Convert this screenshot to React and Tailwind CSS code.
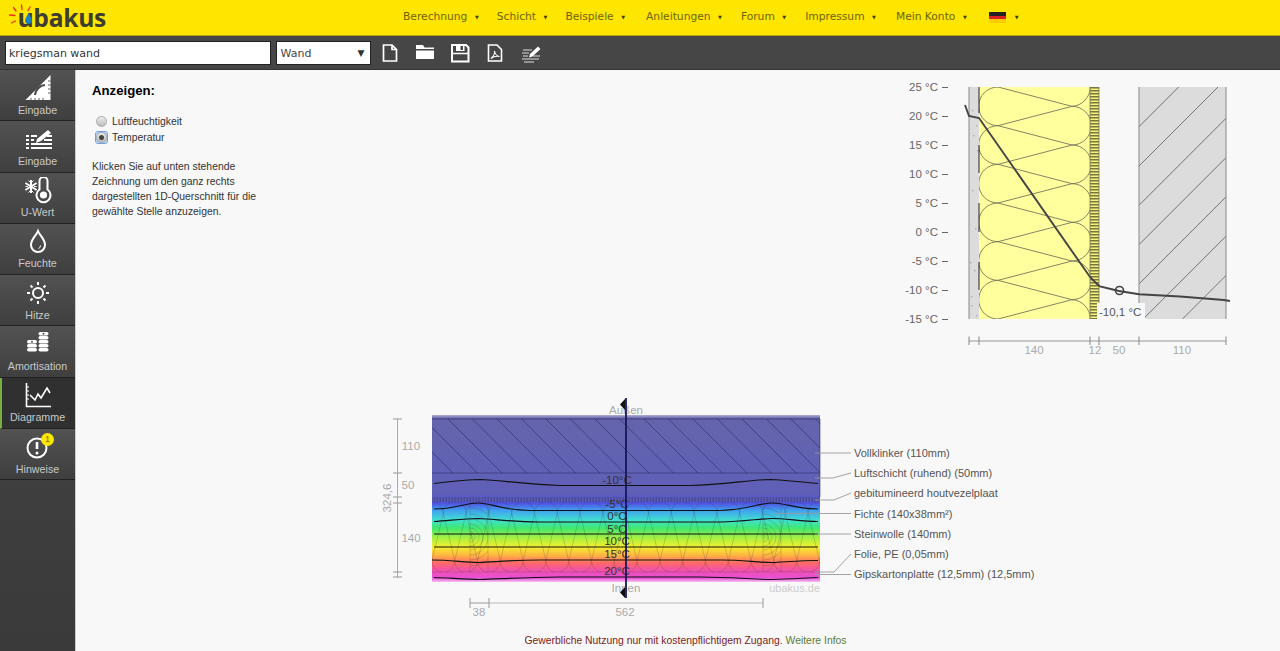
const navItems = [
  ['Berechnung', ''],
  ['Schicht', ''],
  ['Beispiele', ''],
  ['Anleitungen', 'ml-[3px]'],
  ['Forum', 'ml-[1px]'],
  ['Impressum', 'ml-[1px]'],
  ['Mein Konto', 'ml-[2px]'],
];

const range = (n) => Array.from({ length: n }, (_, i) => i);

function Logo() {
  return (
    <div className="relative w-[110px] h-[36px] shrink-0">
      <span className="absolute left-[17.5px] top-[0px] text-[24.6px] leading-[36px] font-bold tracking-[-0.3px] text-[#3d3d32] font-['Open_Sans',sans-serif]">
        ubakus
      </span>
      <svg className="absolute left-0 top-0" width="40" height="36" viewBox="0 0 40 36">
        <g stroke="#e8301c" strokeWidth="1.3" strokeLinecap="round">
          <path d="M21.5 5 L22 9.5" />
          <path d="M13.5 7.5 L16 11" />
          <path d="M9.5 15 L15 15.5" />
          <path d="M11.5 23 L15.5 21" />
          <path d="M30 7 L28 10.5" />
        </g>
        <path d="M28.5 13 c1.6 3 3.2 5 3.2 7.6 a3.3 3.3 0 0 1 -6.6 0 c0 -2.6 2 -4.6 3.4 -7.6z" fill="#1f7fc4" />
      </svg>
    </div>
  );
}

function Header() {
  return (
    <header className="h-[36px] bg-[#ffe600] border-b border-[#b8a600] flex items-center font-['DejaVu_Sans',sans-serif]">
      <Logo />
      <nav className="flex items-center ml-[293px] text-[10.7px] text-[#6e6410] gap-[18px]">
        {navItems.map(([item, extra]) => (
          <span key={item} className={'flex items-center gap-[7.5px] ' + extra}>
            {item}
            <span className="text-[5px] text-[#40400c]">▼</span>
          </span>
        ))}
        <span className="flex items-center gap-[9px] ml-[4px]">
          <span className="w-[17px] h-[11px] flex flex-col">
            <span className="h-1/3 bg-[#222]" />
            <span className="h-1/3 bg-[#d22]" />
            <span className="h-1/3 bg-[#fc0]" />
          </span>
          <span className="text-[5px] text-[#40400c]">▼</span>
        </span>
      </nav>
    </header>
  );
}

function ToolIcon({ children }) {
  return (
    <svg width="22" height="22" viewBox="0 0 22 22" className="shrink-0">
      {children}
    </svg>
  );
}

function Toolbar() {
  return (
    <div className="h-[34px] bg-[#464646] flex items-center pl-[5px] border-b border-[#333] font-['DejaVu_Sans',sans-serif]">
      <div className="w-[266px] h-[24px] bg-white border border-[#222] text-[11px] leading-[23px] pl-[3px] text-[#333]">kriegsman wand</div>
      <div className="ml-[4.5px] w-[95px] h-[24px] bg-white border border-[#222] text-[11px] leading-[23px] pl-[4px] text-[#444] flex justify-between pr-[5px]">
        Wand<span className="text-[9px] text-[#333]">▼</span>
      </div>
      <div className="flex items-center ml-[8px] gap-[13px]">
        <ToolIcon>
          <path d="M4.5 3 H13 L17.5 7.5 V19 H4.5 Z M13 3 V7.5 H17.5" fill="none" stroke="#fff" strokeWidth="1.7" />
        </ToolIcon>
        <ToolIcon>
          <path d="M2 5.5 V3 H9 L10.5 5.5 H20 V7 H2Z M2 8.5 H20 V17 H2Z" fill="#fff" />
        </ToolIcon>
        <ToolIcon>
          <path d="M3 3 H17 L19.5 5.5 V19.5 H3 Z" fill="none" stroke="#fff" strokeWidth="2" />
          <path d="M7 3 H15.5 V9 H7Z" fill="#fff" />
          <path d="M11.5 4 H14 V8 H11.5Z" fill="#464646" />
          <path d="M3 11.5 H19" stroke="#fff" strokeWidth="1.5" />
        </ToolIcon>
        <ToolIcon>
          <path d="M4.5 3 H13 L17.5 7.5 V19 H4.5 Z" fill="none" stroke="#fff" strokeWidth="1.6" />
          <path d="M7 16.5 C9 14.5 11 11 10.5 9 C11 12 13 14 15.5 14.5 C12.5 14 9.5 14.5 7 16.5Z" fill="none" stroke="#fff" strokeWidth="1.1" />
        </ToolIcon>
        <svg width="22" height="22" viewBox="0 0 22 22" className="shrink-0 ml-[1px]">
          <path d="M10 12 L18 4.5 L20.5 7 L12.5 14.5 L9 15.5Z" fill="#fff" />
          <path d="M3 8 H12 M2 11 H9 M3 14 H8 M2 17 H19 M4 20 H14 M13 14 H20" stroke="#ddd" strokeWidth="1" />
        </svg>
      </div>
    </div>
  );
}

const sideItems = [
  {
    label: 'Eingabe',
    icon: (
      <g>
        <path d="M1.5 26 L26.5 1 V26 Z" fill="#fff" />
        <path d="M11 21 A11 11 0 0 1 21 11" fill="none" stroke="#4a4a4a" strokeWidth="2.2" />
        <path d="M24 7 H26.5 M24 11 H26.5 M24 15 H26.5 M24 19 H26.5 M7 24 V26 M11 24 V26 M15 24 V26 M19 24 V26" stroke="#4a4a4a" strokeWidth="0.9" />
      </g>
    ),
  },
  {
    label: 'Eingabe',
    icon: (
      <g fill="#fff">
        <path d="M13 14 L24 5 L27 8 L17 16 L12 18Z" />
        <path d="M2 10 H5 V12 H2Z M7 10 H13 V12 H7Z M2 14 H5 V16 H2Z M7 14 H10 V16 H7Z M2 18 H5 V20 H2Z M7 18 H28 V20 H7Z M2 22 H5 V24 H2Z M7 22 H28 V24 H7Z M20 14 H28 V16 H20Z M23 10 H28 V12 H23Z" />
      </g>
    ),
  },
  {
    label: 'U-Wert',
    icon: (
      <g>
        <path d="M15.5 12.5 V4 a4 4 0 0 1 8 0 V12.5 a7 7 0 1 1 -8 0Z" fill="none" stroke="#fff" strokeWidth="2" />
        <circle cx="19.5" cy="18" r="3.6" fill="#fff" />
        <path d="M7 3 V16 M1.4 6 L12.6 13 M12.6 6 L1.4 13" stroke="#fff" strokeWidth="2" />
        <path d="M4.5 3.5 L7 6 L9.5 3.5 M4.5 15.5 L7 13 L9.5 15.5 M1.5 9.5 L4 9.5 M10 9.5 L12.5 9.5" fill="none" stroke="#fff" strokeWidth="1" />
      </g>
    ),
  },
  {
    label: 'Feuchte',
    icon: (
      <g fill="none" stroke="#fff">
        <path d="M14 3 C16 8 21 11 21 17 a7 7 0 0 1 -14 0 C7 11 12 8 14 3Z" strokeWidth="2" />
        <path d="M16.5 17.5 a3 3 0 0 1 -2 3" strokeWidth="1" />
      </g>
    ),
  },
  {
    label: 'Hitze',
    icon: (
      <g fill="none" stroke="#fff" strokeWidth="2">
        <circle cx="14" cy="14" r="5" />
        <path d="M14 3 V6 M14 22 V25 M3 14 H6 M22 14 H25 M6.5 6.5 L8.5 8.5 M19.5 19.5 L21.5 21.5 M6.5 21.5 L8.5 19.5 M19.5 8.5 L21.5 6.5" />
      </g>
    ),
  },
  {
    label: 'Amortisation',
    icon: (
      <g fill="#fff">
        {[2, 6, 10, 14, 18].map((y) => <rect key={y} x="14.5" y={y} width="10" height="3.4" rx="1.7" />)}
        {[10, 14, 18].map((y) => <rect key={y} x="3" y={y} width="10" height="3.4" rx="1.7" />)}
        <circle cx="19.5" cy="3.7" r="1" fill="#555" />
        <circle cx="8" cy="11.7" r="1" fill="#555" />
      </g>
    ),
  },
  {
    label: 'Diagramme',
    active: true,
    icon: (
      <g fill="none" stroke="#fff">
        <path d="M2.5 1 V24.5 H27" strokeWidth="1.6" />
        <path d="M2.5 5 H5 M2.5 9 H5 M2.5 13 H5 M2.5 17 H5" strokeWidth="1" />
        <path d="M6 13 L11 18 L14 12 L17 16 L23 6 L26 11" strokeWidth="1.6" />
      </g>
    ),
  },
  {
    label: 'Hinweise',
    badge: true,
    icon: (
      <g fill="none" stroke="#fff">
        <circle cx="13" cy="15" r="9.5" strokeWidth="2" />
        <path d="M13 9 V16" strokeWidth="2.6" />
        <circle cx="13" cy="20" r="1.5" fill="#fff" stroke="none" />
      </g>
    ),
  },
];

function Sidebar() {
  return (
    <aside className="w-[76px] shrink-0 bg-gradient-to-b from-[#4a4a4a] to-[#3a3a3a] border-r border-[#ccc] font-['Liberation_Sans',sans-serif]">
      {sideItems.map((item, i) => (
        <div
          key={i}
          className={
            'relative h-[51.3px] flex flex-col items-center pt-[4px] border-b border-[#222] text-[10.7px] text-[#c8c8c8] ' +
            (item.active ? 'bg-[#303030] border-l-2 border-l-[#76b041] pr-[2px]' : 'bg-gradient-to-b from-[#525252] to-[#3f3f3f]')
          }
        >
          <svg width="28" height="28" viewBox="0 0 28 28">{item.icon}</svg>
          <span className="leading-[14px] mt-[0.5px]">{item.label}</span>
          {item.badge && (
            <span className="absolute left-[41px] top-[4px] w-[13px] h-[13px] rounded-full bg-[#ffe600] text-[#7a6a00] text-[9px] leading-[13px] text-center">1</span>
          )}
        </div>
      ))}
    </aside>
  );
}

function Radio({ checked }) {
  return (
    <span className={'w-[11px] h-[11px] flex items-center justify-center rounded-[2px] ' + (checked ? 'bg-[#b8d2f4] outline outline-1 outline-[#6f9fe0]' : '')}>
      <span className="w-[11px] h-[11px] rounded-full border border-[#aaa] bg-gradient-to-b from-[#eee] to-[#bbb] flex items-center justify-center">
        {checked && <span className="w-[5px] h-[5px] rounded-full bg-[#444]" />}
      </span>
    </span>
  );
}

function InfoPanel() {
  return (
    <div className="w-[190px] shrink-0 pt-[12px] text-[#333] text-[10.4px] leading-[15px] font-['Liberation_Sans',sans-serif]">
      <h2 className="text-[13.2px] leading-[18px] font-bold text-black">Anzeigen:</h2>
      <div className="mt-[14px] flex flex-col gap-[2px] pl-[4px]">
        <label className="flex items-center gap-[5px] h-[14px]"><Radio />Luftfeuchtigkeit</label>
        <label className="flex items-center gap-[5px] h-[14px]"><Radio checked />Temperatur</label>
      </div>
      <p className="mt-[15px] w-[170px]">
        Klicken Sie auf unten stehende Zeichnung um den ganz rechts dargestellten 1D-Querschnitt für die gewählte Stelle anzuzeigen.
      </p>
    </div>
  );
}

const tempLabels = ['25', '20', '15', '10', '5', '0', '-5', '-10', '-15'];

function CrossSection() {
  const period = 38.67;
  let loops = '';
  range(6).forEach((i) => {
    const y = 87 + period * i;
    loops += `M998 ${y} A19.33 19.33 0 0 0 998 ${y + period} `;
    loops += `M998 ${y} L1072 ${y + period / 2} M998 ${y + period} L1072 ${y + period / 2} `;
    if (i < 5) loops += `M1072 ${y + period / 2} A19.33 19.33 0 0 1 1072 ${y + period * 1.5} `;
  });
  return (
    <svg width="340" height="290" viewBox="900 75 340 290" className="shrink-0 mt-[5px] font-['Liberation_Sans',sans-serif]">
      <defs>
        <clipPath id="brick"><rect x="1139" y="87" width="87" height="232" /></clipPath>
        <clipPath id="wool"><rect x="979" y="87" width="111" height="232" /></clipPath>
        <pattern id="wood" width="9" height="3" patternUnits="userSpaceOnUse" y="87">
          <rect width="9" height="3" fill="#f4f07a" />
          <rect y="0" width="9" height="1.5" fill="#77773f" />
        </pattern>
      </defs>
      {tempLabels.map((t, i) => (
        <g key={t}>
          <text x="938" y={91 + i * 29} textAnchor="end" fontSize="11.5" fill="#666">{t} °C</text>
          <path d={`M942 ${87.5 + i * 29} H948`} stroke="#666" strokeWidth="1" />
        </g>
      ))}
      <rect x="969" y="87" width="10" height="232" fill="#dcdcdc" />
      <path d="M969 87 V319" stroke="#888" strokeWidth="1" />
      {[[972, 110], [976, 125], [973, 135], [977, 150], [972, 190], [975, 228], [970, 262], [974, 270], [971, 296], [976, 315], [971, 305]].map(([x, y]) => (
        <rect key={y} x={x} y={y} width="1.4" height="1.4" fill="#aaa" />
      ))}
      <rect x="979" y="87" width="111" height="232" fill="#ffff9e" />
      <path d={loops} clipPath="url(#wool)" fill="none" stroke="#77775c" strokeWidth="0.9" />
      <path d="M1072 67.7 A19.33 19.33 0 0 1 1072 106.3 M1072 299.7 A19.33 19.33 0 0 1 1072 338.3" clipPath="url(#wool)" fill="none" stroke="#77775c" strokeWidth="0.9" />
      <path d="M979 87 V113 M979 145 V173 M979 203 V232 M979 262 V290" stroke="#222" strokeWidth="1" />
      <rect x="1090" y="87" width="9" height="232" fill="url(#wood)" />
      <path d="M1090 87 V319 M1099 87 V319" stroke="#77775c" strokeWidth="0.8" />
      <rect x="1139" y="87" width="87" height="232" fill="#dcdcdc" />
      <g clipPath="url(#brick)" stroke="#666" strokeWidth="0.9">
        {range(7).map((i) => (
          <path key={i} d={`M1139 ${126.7 + i * 39.3} L1239 ${26.7 + i * 39.3}`} />
        ))}
      </g>
      <path d="M1139 87 V319 M1226 87 V319" stroke="#888" strokeWidth="1" />
      <rect x="1097" y="303" width="48" height="16" fill="#f8f8f8" />
      <text x="1099" y="316" fontSize="11.5" fill="#555">-10,1 °C</text>
      <path d="M965 105 L969 116 L979 118 L1090 277 L1097 284 L1100 286.5 L1119 291 L1139 294.3 L1180 296.5 L1224 300 L1230 301" fill="none" stroke="#444" strokeWidth="1.9" />
      <circle cx="1119.5" cy="290.5" r="4" fill="none" stroke="#444" strokeWidth="1.6" />
      <path d="M969 341 H1226" stroke="#999" />
      {[969, 979, 1090, 1099, 1139, 1226].map((x) => (
        <path key={x} d={`M${x} 336.5 V345`} stroke="#888" />
      ))}
      {[[1034, '140'], [1095, '12'], [1119, '50'], [1182, '110']].map(([x, t]) => (
        <text key={t} x={x} y="354" fontSize="11.5" fill="#aaa" textAnchor="middle">{t}</text>
      ))}
    </svg>
  );
}

const isotherms = [
  'M434 483.5 C455 481 470 479.5 481 479.5 C500 480 520 484 560 485.5 H690 C725 485 750 479.5 771 479.5 C785 480 800 482 818 483.5',
  'M434 509 C455 509 465 503 478 503 C492 503 500 510 530 510.5 H720 C745 510 760 503 772 503 C786 503 795 509 818 509',
  'M434 521.5 C450 520.5 465 518.5 478 518.5 C495 519 510 522 540 522 H720 C745 521.5 760 518.5 772 518.5 C785 518.5 800 521 818 521.5',
  'M434 534 H818',
  'M434 547 H818',
  'M432 560 C450 560 465 562.5 478 562.5 C495 562 510 560 540 560 H720 C745 560 755 562.5 772 562.5 C785 562 800 560.5 818 560.5',
  'M434 577.5 C450 578 465 579.5 480 579.5 C500 579 520 577.5 560 577 H700 C730 577 755 579.5 772 579.5 C790 579 805 578 818 577.5',
];

const tempMarks = [['-10°C', 484], ['-5°C', 508], ['0°C', 520], ['5°C', 532.5], ['10°C', 545], ['15°C', 558], ['20°C', 575]];

const layerLabels = [
  ['Vollklinker (110mm)', 457, 'M815 453 H851'],
  ['Luftschicht (ruhend) (50mm)', 477, 'M815 478 H833 L851 473'],
  ['gebitumineerd houtvezelplaat', 497, 'M815 500 H834 L851 493'],
  ['Fichte (140x38mm²)', 518, 'M776 513.5 H851'],
  ['Steinwolle (140mm)', 538, 'M815 534 H851'],
  ['Folie, PE (0,05mm)', 558, 'M815 572 H834 L851 554'],
  ['Gipskartonplatte (12,5mm) (12,5mm)', 578, 'M815 574.5 H851'],
];

function WoodRings({ x }) {
  const id = `timber${x}`;
  return (
    <g>
      <clipPath id={id}><rect x={x} y="503" width="18" height="69" /></clipPath>
      <g fill="none" stroke="#443" strokeOpacity="0.3" strokeWidth="0.7">
        <path d={`M${x} 503 V572 M${x + 18} 503 V572`} />
        <g clipPath={`url(#${id})`}>
          {[2, 5, 9, 13, 18, 23, 29].map((r) => (
            <path key={r} d={`M${x} ${537 - r} A${r} ${r} 0 0 1 ${x} ${537 + r}`} />
          ))}
        </g>
      </g>
    </g>
  );
}

function HeatMap() {
  const p = 22.8;
  let wool = '';
  range(19).forEach((i) => {
    const x = 420.5 + i * p;
    wool += `M${x} 513 A${p / 2} ${p / 2} 0 0 1 ${x + p} 513 `;
    wool += `M${x} 513 L${x + p / 2} 561 M${x + p} 513 L${x + p / 2} 561 `;
    wool += `M${x + p / 2} 561 A${p / 2} ${p / 2} 0 0 0 ${x + p * 1.5} 561 `;
  });
  return (
    <svg width="670" height="225" viewBox="375 395 670 225" className="shrink-0 font-['Liberation_Sans',sans-serif]">
      <defs>
        <linearGradient id="heat" x1="0" y1="0" x2="0" y2="1">
          <stop offset="0" stopColor="#b0b0d4" />
          <stop offset="0.02" stopColor="#6464ac" />
          <stop offset="0.47" stopColor="#5f5fb8" />
          <stop offset="0.527" stopColor="#5050e0" />
          <stop offset="0.57" stopColor="#40a0f0" />
          <stop offset="0.63" stopColor="#40e0d0" />
          <stop offset="0.677" stopColor="#40e870" />
          <stop offset="0.737" stopColor="#a8f040" />
          <stop offset="0.79" stopColor="#f4f030" />
          <stop offset="0.838" stopColor="#ffb840" />
          <stop offset="0.886" stopColor="#ff6868" />
          <stop offset="0.934" stopColor="#f050b0" />
          <stop offset="0.976" stopColor="#e850d8" />
          <stop offset="1" stopColor="#f8c0f0" />
        </linearGradient>
        <clipPath id="klinker"><rect x="432" y="419" width="388" height="54" /></clipPath>
        <clipPath id="map"><rect x="432" y="502" width="388" height="70" /></clipPath>
        <pattern id="strip" width="3" height="4" patternUnits="userSpaceOnUse" y="497">
          <rect width="3" height="4" fill="#4a4aa0" />
          <rect width="1.5" height="4" fill="#5a5ab0" />
        </pattern>
      </defs>
      <rect x="432" y="415" width="388" height="167" fill="url(#heat)" />
      <g clipPath="url(#klinker)" stroke="#2a2a60" strokeOpacity="0.75" strokeWidth="0.8">
        {range(20).map((i) => (
          <path key={i} d={`M${350 + i * 24.5} 419 L${410 + i * 24.5} 479`} />
        ))}
      </g>
      <path d="M432 419 H820 M432 473 H820 M820 419 V497" stroke="#2a2a60" strokeOpacity="0.7" strokeWidth="0.8" />
      <rect x="432" y="497" width="388" height="5" fill="url(#strip)" />
      <path d={wool} clipPath="url(#map)" fill="none" stroke="#333" strokeOpacity="0.3" strokeWidth="0.7" />
      <WoodRings x={470} />
      <WoodRings x={763} />
      <path d="M432 572 H820" stroke="#444" strokeOpacity="0.3" strokeWidth="0.7" />
      {isotherms.map((d) => (
        <path key={d} d={d} fill="none" stroke="#111" strokeWidth="1.2" />
      ))}
      {tempMarks.map(([t, y]) => (
        <text key={t} x="617" y={y} fontSize="11.5" fill="#333" textAnchor="middle">{t}</text>
      ))}
      <text x="626" y="414" fontSize="11.5" fill="#aaa" textAnchor="middle">Außen</text>
      <text x="626" y="592" fontSize="11.5" fill="#aaa" textAnchor="middle">Innen</text>
      <text x="820" y="592" fontSize="11" fill="#ccc" textAnchor="end">ubakus.de</text>
      <path d="M626 398 V598" stroke="#16165a" strokeWidth="1.8" />
      <path d="M625 399 V410 L620 404.5Z M625 587 V598 L620 592.5Z" fill="#111" />
      <path d="M397.5 419 V578" stroke="#aaa" />
      {[419, 473, 497, 503, 572, 577].map((y) => (
        <path key={y} d={`M393 ${y} H402`} stroke="#999" />
      ))}
      {[[411, 450, '110'], [408, 489, '50'], [411, 542, '140']].map(([x, y, t]) => (
        <text key={t} x={x} y={y} fontSize="11.5" fill="#aaa" textAnchor="middle">{t}</text>
      ))}
      <text x="391" y="498" fontSize="11.5" fill="#aaa" textAnchor="middle" transform="rotate(-90 391 498)">324,6</text>
      <path d="M470 603 H489" stroke="#999" />
      <path d="M489 603 H763" stroke="#bbb" />
      <path d="M470 598 V608 M489 598 V608 M763 598 V608" stroke="#999" />
      <text x="479" y="616" fontSize="11.5" fill="#aaa" textAnchor="middle">38</text>
      <text x="625" y="616" fontSize="11.5" fill="#aaa" textAnchor="middle">562</text>
      {layerLabels.map(([t, y, d]) => (
        <g key={t}>
          <path d={d} fill="none" stroke="#999" strokeWidth="0.9" />
          <text x="854" y={y} fontSize="11" fill="#555">{t}</text>
        </g>
      ))}
    </svg>
  );
}

export default function App() {
  return (
    <div className="h-[651px] overflow-hidden flex flex-col bg-[#f8f8f8]">
      <Header />
      <Toolbar />
      <div className="flex flex-1 min-h-0">
        <Sidebar />
        <main className="flex-1 flex flex-col min-w-0">
          <div className="h-[325px] flex pl-[16px]">
            <InfoPanel />
            <div className="ml-[618px]"><CrossSection /></div>
          </div>
          <div className="pl-[299px]"><HeatMap /></div>
          <p className="mt-[14px] text-center pl-[15px] text-[10.4px] leading-[14px] text-[#7a1c1c] font-['Liberation_Sans',sans-serif]">
            Gewerbliche Nutzung nur mit kostenpflichtigem Zugang. <span className="text-[#5c7c34]">Weitere Infos</span>
          </p>
        </main>
      </div>
    </div>
  );
}
